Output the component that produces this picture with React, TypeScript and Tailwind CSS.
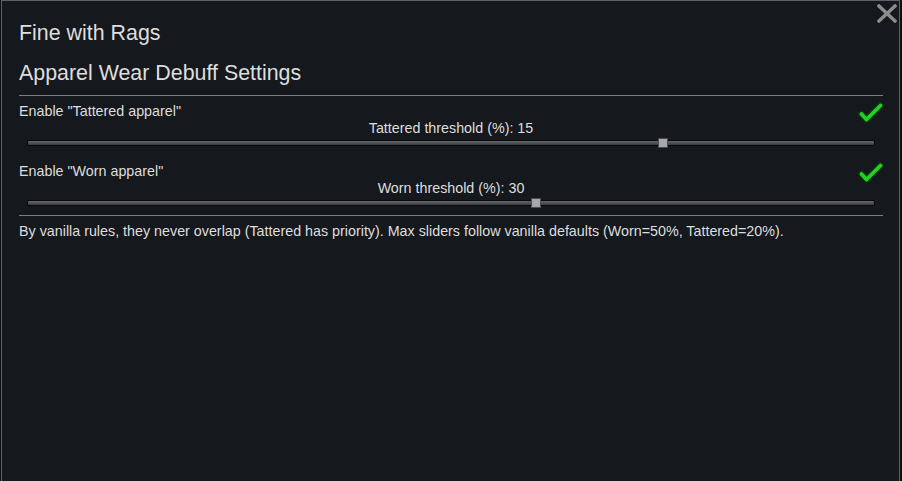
import React from "react";

type SliderProps = { value: number; max: number };

const Slider = ({ value, max }: SliderProps) => {
  const pct = (value / max) * 100;
  return (
    <div className="h-3 px-2 flex items-center">
      <div className="relative w-full h-[6px] rounded-[2px] border border-[#08090b] bg-gradient-to-b from-[#66686b] to-[#393b3e]">
        <div
          className="absolute top-1/2 w-[10px] h-[10px] -translate-x-1/2 -translate-y-1/2 border border-[#4a4c4f] bg-[#a6a8ab]"
          style={{ left: `${pct}%` }}
        />
      </div>
    </div>
  );
};

const Check = () => (
  <svg width="24" height="24" viewBox="0 0 24 24" className="shrink-0 -mt-[2px] overflow-visible">
    <path d="M2.5 13 L7.5 18.5 L21.5 4.5" fill="none" stroke="#0b3a0b" strokeWidth="6.4" strokeLinecap="round" strokeLinejoin="round" />
    <path d="M2.5 13 L7.5 18.5 L21.5 4.5" fill="none" stroke="#22d022" strokeWidth="3.8" strokeLinecap="round" strokeLinejoin="round" />
  </svg>
);

type ToggleProps = { label: string; caption: string; value: number; max: number };

const ToggleSlider = ({ label, caption, value, max }: ToggleProps) => (
  <div className="flex flex-col">
    <div className="flex justify-between items-start h-[17px]">
      <span>{label}</span>
      <Check />
    </div>
    <div className="text-center">{caption}</div>
    <Slider value={value} max={max} />
  </div>
);

export default function App() {
  return (
    <div className="w-[902px] h-[481px] bg-[#0e1013] pl-[1px]">
      <div
        className="relative w-[899px] h-[481px] bg-[#15181d] border-t border-l border-r border-[#5d6268] text-[#dedede]"
        style={{ fontFamily: '"Liberation Sans", Arial, sans-serif' }}
      >
        <svg width="20" height="19" viewBox="0 0 20 19" className="absolute top-[3px] right-[2px]">
          <path d="M2 2 L18 17 M18 2 L2 17" stroke="#8c8c8c" strokeWidth="3.4" strokeLinecap="square" />
        </svg>

        <div className="flex flex-col pt-[18px] pl-[17px] pr-[16px] text-[14.3px] leading-[17px]">
          <h1 className="text-[21.4px] leading-[28px]">Fine with Rags</h1>
          <h2 className="text-[21.4px] leading-[28px] mt-3">Apparel Wear Debuff Settings</h2>
          <div className="h-px bg-[#7a7c80] mt-2 mb-[7px]" />

          <ToggleSlider label={'Enable "Tattered apparel"'} caption="Tattered threshold (%): 15" value={15} max={20} />
          <div className="h-[14px]" />
          <ToggleSlider label={'Enable "Worn apparel"'} caption="Worn threshold (%): 30" value={30} max={50} />

          <div className="h-px bg-[#7a7c80] mt-[6px] mb-[7px]" />
          <p>
            By vanilla rules, they never overlap (Tattered has priority). Max sliders follow vanilla defaults (Worn=50%,
            Tattered=20%).
          </p>
        </div>
      </div>
    </div>
  );
}
